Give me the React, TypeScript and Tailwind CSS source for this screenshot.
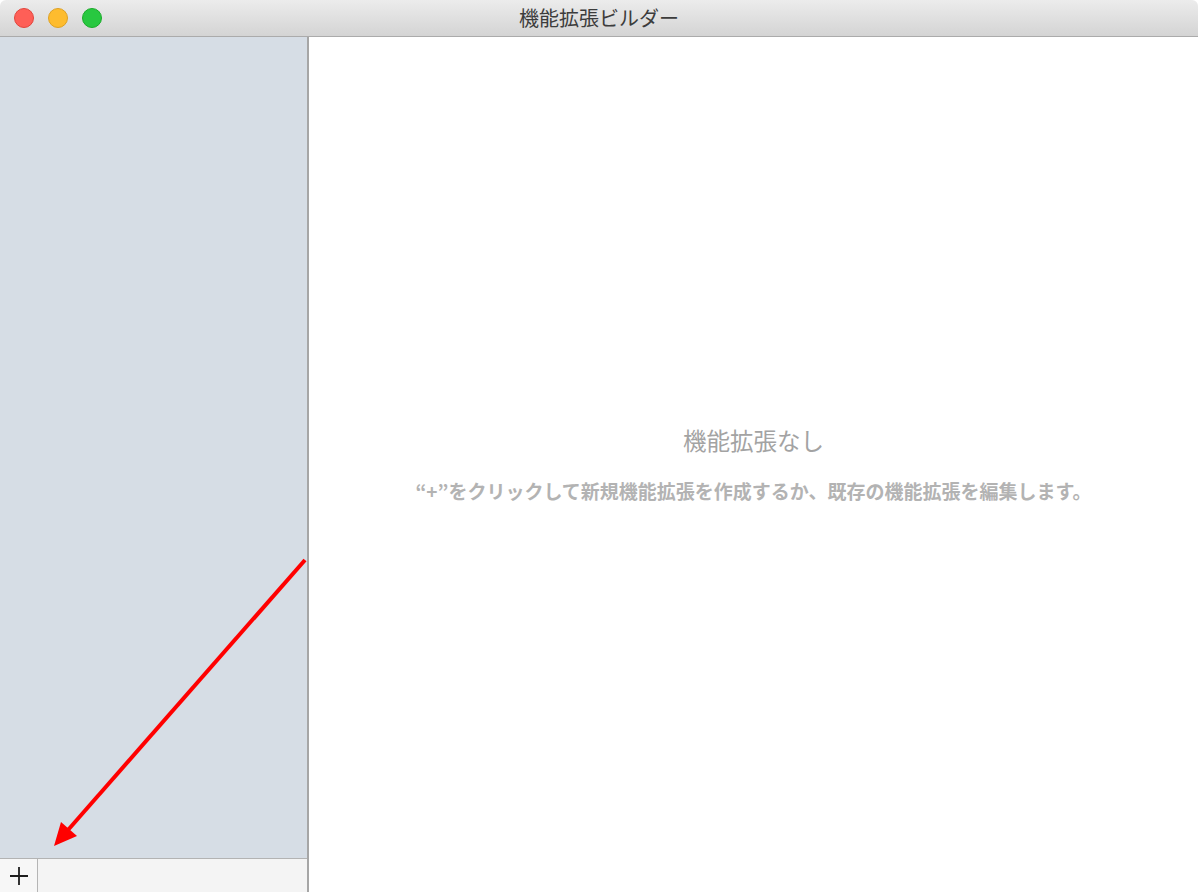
const JP = "font-['Noto_Sans_CJK_JP','Noto_Sans',sans-serif]";

function TrafficLights() {
  return (
    <div className="flex items-center gap-[14px] pl-[14px]">
      <span className="size-[20px] rounded-full border border-[#e2453c] bg-[#fe5f57]" />
      <span className="size-[20px] rounded-full border border-[#dea123] bg-[#febc2e]" />
      <span className="size-[20px] rounded-full border border-[#1aab29] bg-[#28c840]" />
    </div>
  );
}

function Arrow() {
  // annotation drawn over the sidebar, pointing at the "+" button
  return (
    <svg
      className="pointer-events-none absolute left-0 top-0"
      width="1198"
      height="892"
      viewBox="0 0 1198 892"
      aria-hidden
    >
      <line x1="305" y1="560" x2="68" y2="830" stroke="#ff0000" strokeWidth="4" />
      <polygon points="54,846 61,822 77,836" fill="#ff0000" />
    </svg>
  );
}

export default function App() {
  return (
    <div className={`relative h-[892px] w-[1198px] overflow-hidden bg-white ${JP}`}>
      <div className="flex h-full flex-col overflow-hidden rounded-t-[6px]">
        {/* title bar */}
        <div className="relative flex h-[37px] shrink-0 items-center border-b border-[#ababab] bg-gradient-to-b from-[#ececec] to-[#d4d4d4]">
          <TrafficLights />
          <div className="absolute inset-x-0 top-0 flex h-full items-center justify-center text-[20px] leading-none text-[#3c3c3c]">
            機能拡張ビルダー
          </div>
        </div>

        <div className="flex min-h-0 flex-1">
          {/* sidebar */}
          <div className="flex w-[307px] shrink-0 flex-col bg-[#d6dde5]">
            <div className="flex-1" />
            <div className="flex h-[34px] border-t border-[#b3b3b3] bg-[#f4f4f4]">
              <button
                type="button"
                className="flex w-[38px] items-center justify-center border-r border-[#b5b5b5] bg-[#f7f7f7]"
              >
                <svg width="20" height="20" viewBox="0 0 20 20" stroke="#1e1e1e" strokeWidth="1.8" fill="none">
                  <path d="M10 1v18M1 10h18" />
                </svg>
              </button>
              <div className="flex-1" />
            </div>
          </div>
          <div className="w-[2px] shrink-0 bg-[#a6a6a6]" />

          {/* content */}
          <div className="flex flex-1 flex-col items-center justify-center gap-[28px]">
            <div className="text-[23.5px] leading-none text-[#a3a3a3]">機能拡張なし</div>
            <div className="text-[19px] font-bold leading-none text-[#b3b3b3]">
              “+”をクリックして新規機能拡張を作成するか、既存の機能拡張を編集します。
            </div>
          </div>
        </div>
      </div>
      <Arrow />
    </div>
  );
}
